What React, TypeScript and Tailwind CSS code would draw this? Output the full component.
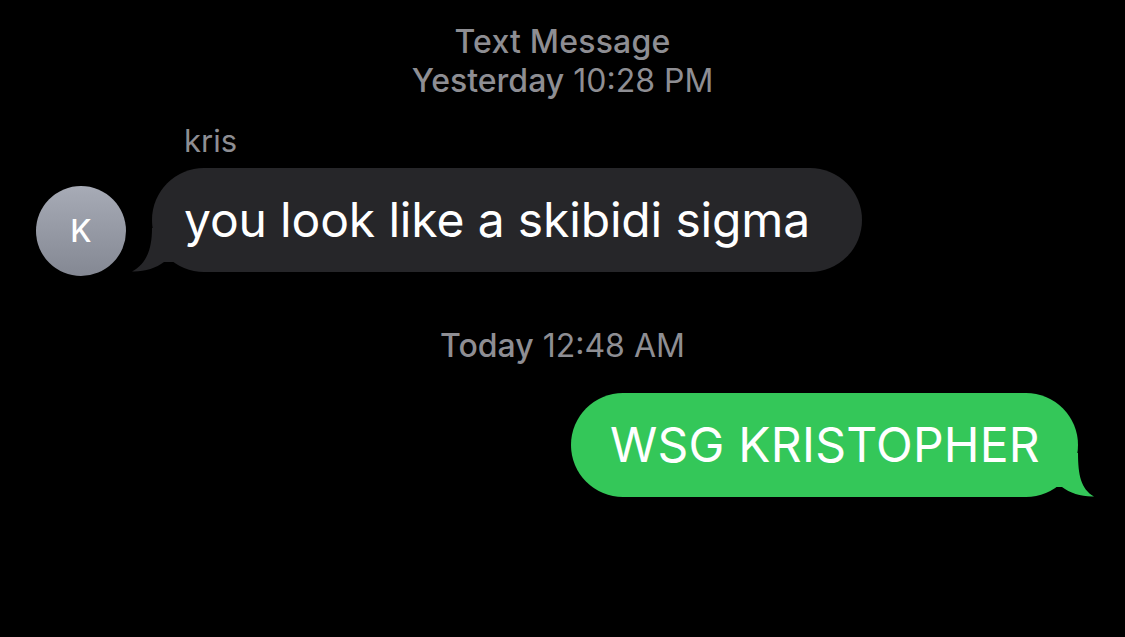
import React from "react";

const GREY = "#262629";
const GREEN = "#34c759";

const LeftTail = () => (
  <svg
    className="absolute left-[-20px] bottom-0"
    width="44"
    height="44"
    viewBox="0 0 44 44"
  >
    <path
      d="M20 0 C20 22 14 36 0 43.5 C12 44 24 40 32 34 L44 34 L44 0 Z"
      fill={GREY}
    />
  </svg>
);

const RightTail = () => (
  <svg
    className="absolute right-[-16px] bottom-0"
    width="44"
    height="44"
    viewBox="0 0 44 44"
  >
    <path
      d="M28 0 C28 22 31 36 44 43.5 C32 44 20 40 12 34 L0 34 L0 0 Z"
      fill={GREEN}
    />
  </svg>
);

export default function App() {
  return (
    <div className="w-[1125px] h-[637px] bg-black overflow-hidden font-['Inter',sans-serif] antialiased">
      {/* header */}
      <div className="pt-[22px] text-center text-[32px] leading-[39px] text-[#8e8e93]">
        <div className="font-medium tracking-[0.2px]">Text Message</div>
        <div>
          <span className="font-medium">Yesterday</span> 10:28 PM
        </div>
      </div>

      {/* incoming */}
      <div className="mt-[24px] pl-[184px] text-[31px] leading-[34px] text-[#8e8e93]">
        kris
      </div>
      <div className="mt-[10px] flex items-end pl-[36px]">
        <div className="w-[90px] h-[90px] mb-[-4px] rounded-full bg-gradient-to-b from-[#a7abb6] to-[#848893] flex items-center justify-center text-white text-[31px] font-medium">
          K
        </div>
        <div
          className="relative ml-[26px] h-[104px] rounded-[52px] pl-[32px] pr-[52px] flex items-center text-white text-[48px] tracking-[-0.15px]"
          style={{ backgroundColor: GREY }}
        >
          <LeftTail />
          <span className="relative">you look like a skibidi sigma</span>
        </div>
      </div>

      {/* timestamp */}
      <div className="mt-[54px] text-center text-[32px] leading-[39px] text-[#8e8e93]">
        <span className="font-medium">Today</span> 12:48 AM
      </div>

      {/* outgoing */}
      <div className="mt-[28px] flex justify-end pr-[47px]">
        <div
          className="relative h-[104px] rounded-[52px] pl-[39px] pr-[38px] flex items-center text-white text-[48px] tracking-[0.25px]"
          style={{ backgroundColor: GREEN }}
        >
          <RightTail />
          <span className="relative">WSG KRISTOPHER</span>
        </div>
      </div>
    </div>
  );
}
